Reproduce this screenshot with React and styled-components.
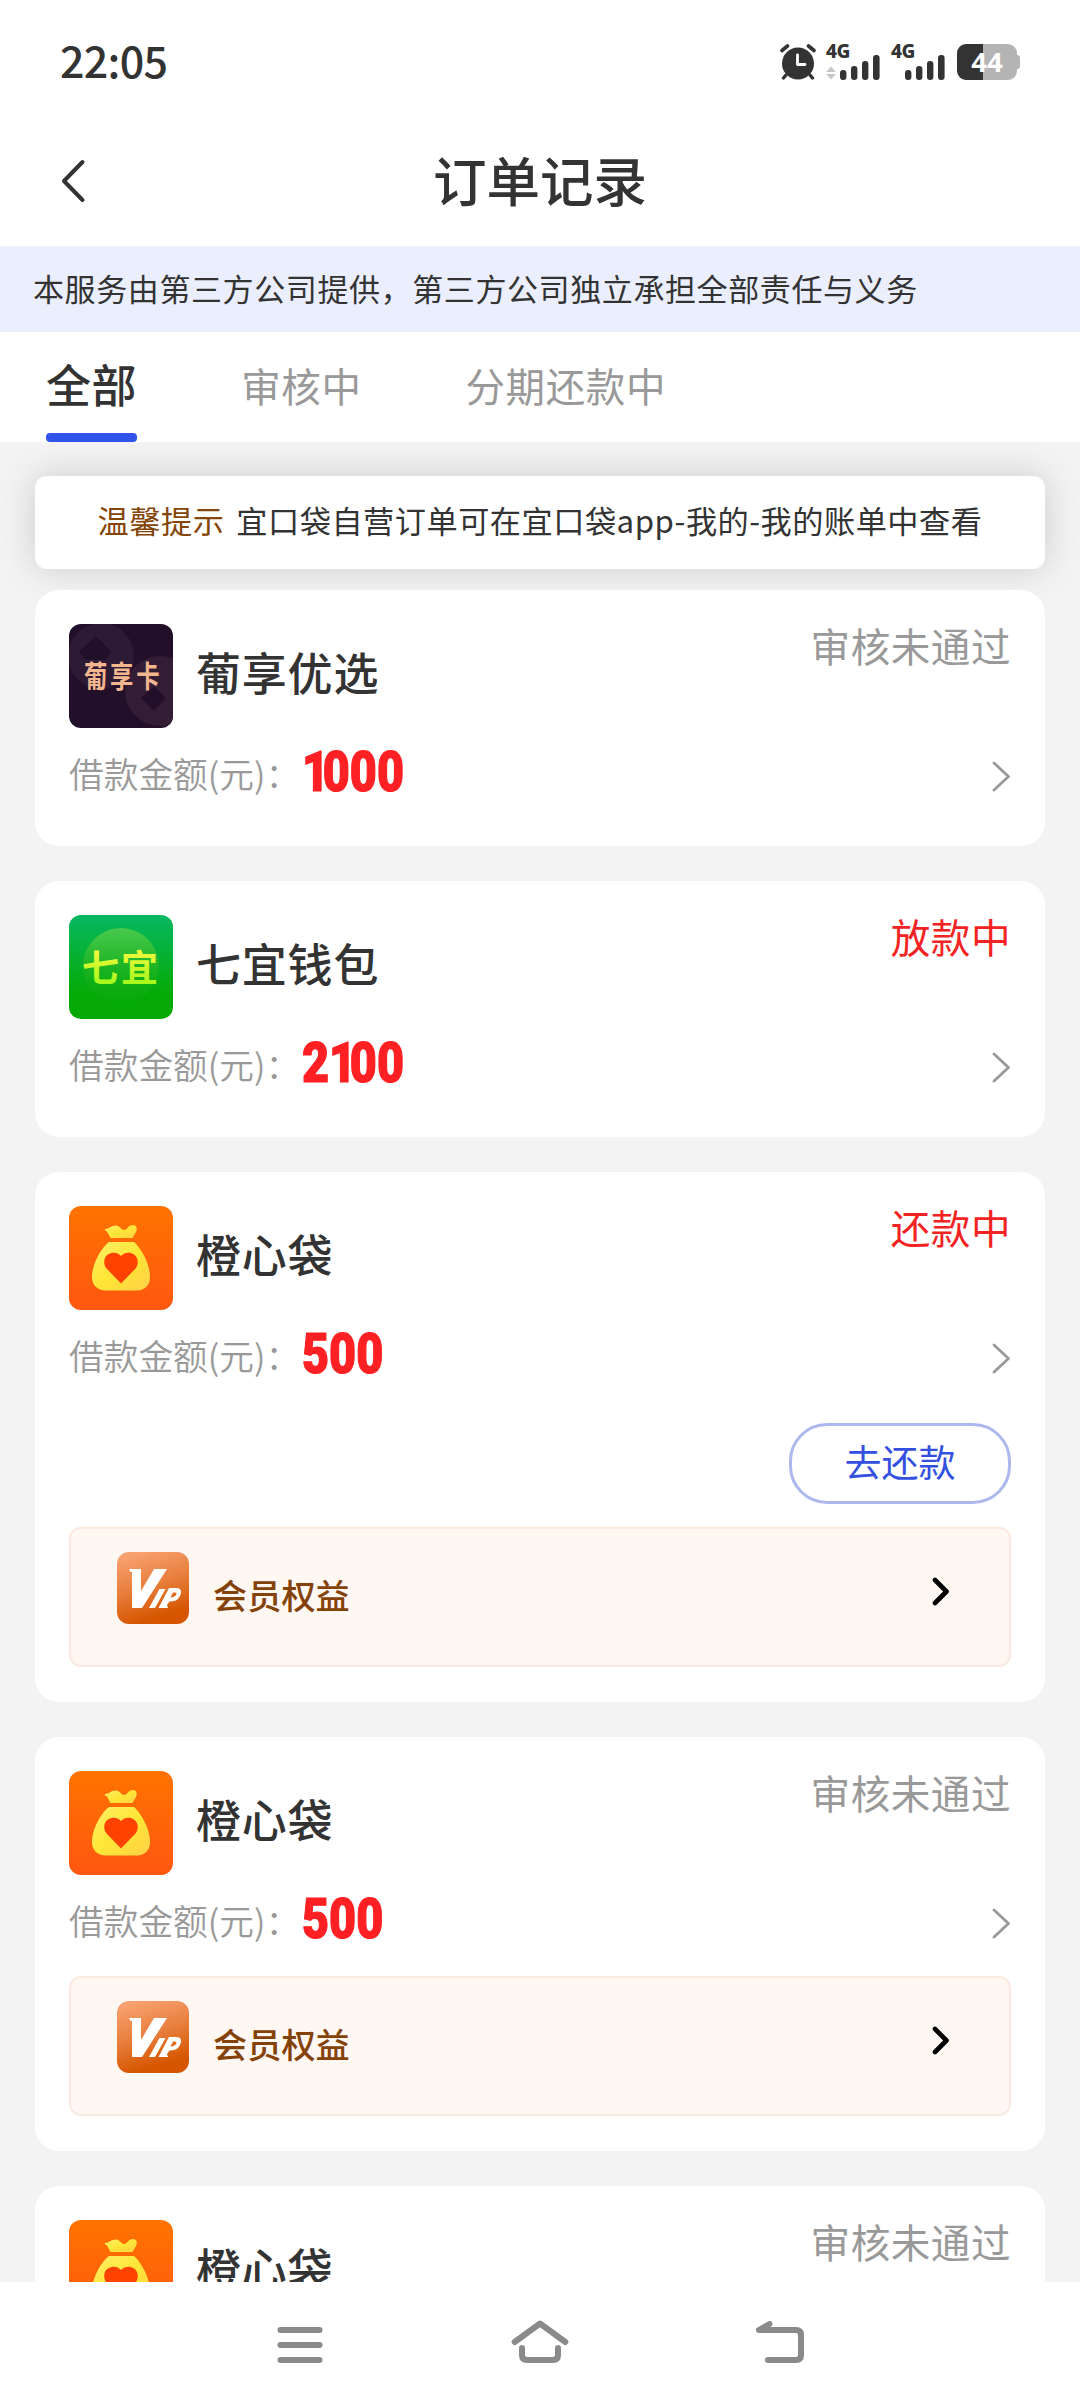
import React from 'react'
import styled, { createGlobalStyle } from 'styled-components'

const orders = [
    { logo: 'grape', name: '葡享优选', amount: '1000', status: '审核未通过' },
    { logo: 'wallet', name: '七宜钱包', amount: '2100', status: '放款中', active: true },
    { logo: 'bag', name: '橙心袋', amount: '500', status: '还款中', active: true, repay: true, vip: true },
    { logo: 'bag', name: '橙心袋', amount: '500', status: '审核未通过', vip: true },
    { logo: 'bag', name: '橙心袋', status: '审核未通过' }
]

const Signal = ({ arrows }) => (
    <SignalBox>
        <SignalLabel>4G</SignalLabel>
        <svg width='55' height='26' viewBox='0 0 55 26'>
            {arrows && <path d='M0 18 L5 12.5 L10 18Z M0 20 H10 L5 25.5Z' fill='#c8c8c8' />}
            <g fill='#333'>
                <rect x='14' y='16' width='6.4' height='10' rx='3' />
                <rect x='25' y='12' width='6.4' height='14' rx='3' />
                <rect x='36' y='7' width='6.4' height='19' rx='3' />
                <rect x='47' y='1' width='6.6' height='25' rx='3' />
            </g>
        </svg>
    </SignalBox>
)

const AlarmIcon = () => (
    <svg width='36' height='36' viewBox='0 0 36 36' fill='none' strokeLinecap='round'>
        <circle cx='18' cy='19.5' r='16' fill='#333' />
        <path d='M2 6.5 L7.5 2 M34 6.5 L28.5 2' stroke='#333' strokeWidth='3.6' />
        <path d='M6 31 L3.5 34 M30 31 L32.5 34' stroke='#333' strokeWidth='3.4' />
        <path d='M17.5 11 V20.5 H25' stroke='#fff' strokeWidth='2.8' strokeLinejoin='round' />
    </svg>
)

const GrapeLogo = () => (
    <Logo viewBox='0 0 104 104'>
        <rect width='104' height='104' fill='#220f29' />
        <circle cx='32' cy='32' r='33' fill='#2d1a34' />
        <circle cx='91' cy='67' r='35' fill='#321d35' />
        <path d='M10 28 L27 12 L43 28 L36 36 H17Z' fill='#220f29' />
        <path d='M72 74 L85 62 L97 74 L85 87Z' fill='#220f29' />
        <LogoText transform='translate(15 63) scale(0.78 1)' fill='#f3b68f' $size='30' $spacing='3.5'>
            葡享卡
        </LogoText>
    </Logo>
)

const WalletLogo = () => (
    <Logo viewBox='0 0 104 104'>
        <defs>
            <linearGradient id='walletBg' x2='0' y2='1'>
                <stop offset='0' stopColor='#07b862' />
                <stop offset='0.75' stopColor='#04aa06' />
                <stop offset='1' stopColor='#06a904' />
            </linearGradient>
            <linearGradient id='walletOrb' x2='0' y2='1'>
                <stop offset='0' stopColor='#49c94e' />
                <stop offset='0.6' stopColor='#16b01c' />
                <stop offset='1' stopColor='#04aa06' />
            </linearGradient>
            <linearGradient id='walletText' x2='0' y2='1'>
                <stop offset='0.2' stopColor='#f6f93c' />
                <stop offset='1' stopColor='#8ef713' />
            </linearGradient>
        </defs>
        <rect width='104' height='104' fill='url(#walletBg)' />
        <circle cx='52' cy='51' r='38' fill='url(#walletOrb)' />
        <LogoText x='13' y='67' fill='url(#walletText)' $size='37' $spacing='2'>七宜</LogoText>
    </Logo>
)

const BagLogo = () => (
    <Logo viewBox='0 0 104 104'>
        <defs>
            <linearGradient id='bagBg' x2='0' y2='1'>
                <stop offset='0' stopColor='#ff7300' />
                <stop offset='1' stopColor='#ff5710' />
            </linearGradient>
            <linearGradient id='bagBody' x2='1' y2='1'>
                <stop offset='0' stopColor='#fff06a' />
                <stop offset='0.5' stopColor='#ffe636' />
                <stop offset='1' stopColor='#ffd147' />
            </linearGradient>
        </defs>
        <rect width='104' height='104' fill='url(#bagBg)' />
        <path
            d='M36 23 C40 23 42 19.500 47 19.500 C51 19.500 52 24 55 24 C58.500 24 59 19 64 19 C68 19 68.500 23 67 26 L63.500 32 H41.500 L38 25.500 C37 24.500 35 25 36 23Z'
            fill='url(#bagBody)'
        />
        <path
            d='M40 36 H65 C72 42 81 58 81 71 C81 79 76 84.500 68 84.500 H37 C28 84.500 23 79 23 71 C23 58 32 42 40 36Z'
            fill='url(#bagBody)'
        />
        <path
            d='M52 77.500 L37.500 62.500 C34 58.500 34.500 51 39 48.500 C43.500 45.500 49 46.500 52 50 C55 46.500 61 45.500 65 48.500 C70 52 69.500 59 66.500 62.500Z'
            fill='#ff4200'
        />
    </Logo>
)

const VipIcon = () => (
    <VipLogo viewBox='0 0 72 72'>
        <defs>
            <linearGradient id='vipBg' x1='0.3' x2='0.6' y2='1'>
                <stop offset='0' stopColor='#f8a170' />
                <stop offset='0.5' stopColor='#e67b38' />
                <stop offset='0.9' stopColor='#d65600' />
            </linearGradient>
        </defs>
        <rect width='72' height='72' fill='url(#vipBg)' />
        <g fill='#fff'>
            <path d='M12 17 H24 V39 L37 17 H50 L25 56 H15 V20 H13.500Z' />
            <path d='M42.500 37 H48.500 L38 56 H32Z' />
            <path
                fillRule='evenodd'
                d='M52 36 H59 C65 36 65.500 41 62 45.500 C60 48.500 57 49.500 52.500 49.500 L50 53 L51 56 H41.500Z M56 40.500 L53.500 45.500 C57 45.500 60 43 59.500 41.500 C59 40.300 58 40.500 56 40.500Z'
            />
        </g>
    </VipLogo>
)

const logos = { grape: GrapeLogo, wallet: WalletLogo, bag: BagLogo }

const OrderCard = ({ order }) => {
    const OrderLogo = logos[order.logo]

    return (
        <Card>
            <CardTop>
                <OrderLogo />
                <Name>{order.name}</Name>
                <Status $active={order.active}>{order.status}</Status>
            </CardTop>
            {order.amount && (
                <AmountRow>
                    <AmountLabel>借款金额(元)：</AmountLabel>
                    <Amount>
                        {order.amount.split('').map((digit, i) => (
                            <Digit key={i} $narrow={digit === '1'}>{digit}</Digit>
                        ))}
                    </Amount>
                    <svg width='20' height='32' viewBox='0 0 20 32' fill='none'>
                        <path d='M3 2 L17.500 15.500 L3 29' stroke='#999' strokeWidth='2.8' strokeLinecap='round' strokeLinejoin='round' />
                    </svg>
                </AmountRow>
            )}
            {order.repay && (
                <Actions>
                    <RepayButton>去还款</RepayButton>
                </Actions>
            )}
            {order.vip && (
                <VipBox $tight={!order.repay}>
                    <VipIcon />
                    <VipLabel>会员权益</VipLabel>
                    <svg width='20' height='30' viewBox='0 0 20 30' fill='none'>
                        <path d='M4 4 L15.500 15.500 L4 27' stroke='#000' strokeWidth='4.600' strokeLinecap='round' strokeLinejoin='round' />
                    </svg>
                </VipBox>
            )}
        </Card>
    )
}

const App = () => (
    <Screen>
        <GlobalStyle />
        <StatusBar>
            <Time>22:05</Time>
            <StatusIcons>
                <AlarmIcon />
                <Signal arrows />
                <Signal />
                <Battery>44</Battery>
            </StatusIcons>
        </StatusBar>
        <Header>
            <svg width='28' height='46' viewBox='0 0 28 46' fill='none'>
                <path d='M23.500 3 L5 22 L23.500 41' stroke='#333' strokeWidth='4' strokeLinecap='round' strokeLinejoin='round' />
            </svg>
            <Title>订单记录</Title>
        </Header>
        <Notice>本服务由第三方公司提供，第三方公司独立承担全部责任与义务</Notice>
        <Tabs>
            <Tab $active>全部</Tab>
            <Tab>审核中</Tab>
            <Tab>分期还款中</Tab>
        </Tabs>
        <List>
            <Tip>
                <TipLabel>温馨提示</TipLabel>
                <span>宜口袋自营订单可在宜口袋app-我的-我的账单中查看</span>
            </Tip>
            {orders.map((order, i) => (
                <OrderCard key={i} order={order} />
            ))}
        </List>
        <NavBar>
            <svg width='60' height='50' viewBox='0 0 60 50'>
                <path d='M10.500 10 H49.500 M10.500 25 H49.500 M10.500 40 H49.500' stroke='#8a8a8a' strokeWidth='6' strokeLinecap='round' />
            </svg>
            <svg width='60' height='50' viewBox='0 0 60 50' fill='none'>
                <path d='M4.700 22 L30 3.500 L55.300 22' stroke='#8a8a8a' strokeWidth='6' strokeLinecap='round' strokeLinejoin='round' />
                <path d='M12 28 V35 Q12 40 17 40 H43 Q48 40 48 35 V28' stroke='#8a8a8a' strokeWidth='6' strokeLinecap='round' />
            </svg>
            <svg width='60' height='50' viewBox='0 0 60 50' fill='none'>
                <path d='M19.500 4 L9 10 H46 Q51 10 51 15 V35 Q51 40 46 40 H18' stroke='#8a8a8a' strokeWidth='6' strokeLinecap='round' strokeLinejoin='round' />
            </svg>
        </NavBar>
    </Screen>
)

const GlobalStyle = createGlobalStyle`
    * {
        box-sizing: border-box;
    }

    body {
        margin: 0;
        color: #333;
        font-family: 'Noto Sans CJK SC', sans-serif;
    }

    svg {
        display: block;
        flex-shrink: 0;
    }
`

const Screen = styled.div`
    width: 1080px;
    height: 2408px;
    display: flex;
    flex-direction: column;
    overflow: hidden;
    background: #fff;
`

const StatusBar = styled.div`
    height: 124px;
    flex-shrink: 0;
    padding: 0 60px 0 60px;
    display: flex;
    justify-content: space-between;
    align-items: center;
`

const Time = styled.div`
    padding-bottom: 6px;
    font-size: 43px;
    font-weight: 500;
    line-height: 50px;
    letter-spacing: -0.7px;
`

const StatusIcons = styled.div`
    height: 36px;
    display: flex;
    align-items: center;
`

const SignalBox = styled.div`
    width: 55px;
    height: 36px;
    margin-left: 10px;
    display: flex;
    flex-direction: column;
    justify-content: space-between;
`

const SignalLabel = styled.div`
    height: 10px;
    font: 800 19px/15px 'Noto Sans', sans-serif;
    letter-spacing: -0.5px;
`

const Battery = styled.div`
    width: 60px;
    height: 36px;
    margin: 0 3px 0 11px;
    position: relative;
    border-radius: 9px;
    background: linear-gradient(to right, #333 26px, #b4b4b4 26px);
    color: #fff;
    font: 700 27.5px/36px 'Noto Sans', sans-serif;
    text-align: center;

    &::after {
        content: '';
        position: absolute;
        right: -3px;
        top: 11px;
        width: 4px;
        height: 14px;
        border-radius: 0 3px 3px 0;
        background: #b4b4b4;
    }
`

const Header = styled.div`
    height: 122px;
    flex-shrink: 0;
    padding: 0 87px 6px 59px;
    display: flex;
    align-items: center;
`

const Title = styled.h1`
    flex: 1;
    margin: 0;
    padding-bottom: 6px;
    font-size: 53.5px;
    font-weight: 500;
    line-height: 60px;
    text-align: center;
`

const Notice = styled.div`
    height: 86px;
    flex-shrink: 0;
    padding-left: 33px;
    background: #ebeefd;
    font-size: 31px;
    line-height: 83px;
    letter-spacing: 0.6px;
    white-space: nowrap;
`

const Tabs = styled.div`
    height: 110px;
    flex-shrink: 0;
    padding-left: 46px;
    display: flex;
    gap: 104px;
`

const Tab = styled.div`
    height: 110px;
    color: ${props => (props.$active ? '#333' : '#999')};
    font-size: ${props => (props.$active ? '45px' : '39.5px')};
    font-weight: ${props => (props.$active ? 500 : 400)};
    line-height: ${props => (props.$active ? '103px' : '105px')};
    letter-spacing: 0.6px;
    white-space: nowrap;

    &::after {
        content: '';
        display: ${props => (props.$active ? 'block' : 'none')};
        height: 9px;
        margin-top: -2px;
        border-radius: 4px;
        background: #3253ea;
    }
`

const List = styled.div`
    flex: 1;
    min-height: 0;
    padding: 34px 35px 0;
    overflow: hidden;
    background: #f3f3f3;
`

const Tip = styled.div`
    height: 93px;
    margin-bottom: 21px;
    padding-bottom: 6px;
    display: flex;
    justify-content: center;
    align-items: center;
    gap: 12px;
    border-radius: 12px;
    background: #fff;
    box-shadow: 0 0 36px rgba(0, 0, 0, 0.16);
    font-size: 31.2px;
    letter-spacing: 0.5px;
    white-space: nowrap;
`

const TipLabel = styled.span`
    color: #854408;
`

const Card = styled.div`
    position: relative;
    margin-bottom: 35px;
    padding: 34px 34px 35px;
    border-radius: 24px;
    background: #fff;
`

const CardTop = styled.div`
    height: 104px;
    display: flex;
    align-items: center;
`

const Logo = styled.svg`
    width: 104px;
    height: 104px;
    border-radius: 12px;
`

const LogoText = styled.text`
    font-size: ${props => props.$size}px;
    font-weight: 700;
    letter-spacing: ${props => props.$spacing}px;
`

const Name = styled.div`
    margin-left: 23px;
    padding-bottom: 8px;
    font-size: 45px;
    font-weight: 500;
    line-height: 60px;
    letter-spacing: 0.8px;
`

const Status = styled.div`
    align-self: flex-start;
    margin: -4px 0 0 auto;
    color: ${props => (props.$active ? '#f42323' : '#999')};
    font-size: 39.6px;
    line-height: 50px;
    letter-spacing: 0.5px;
`

const AmountRow = styled.div`
    height: 83px;
    display: flex;
    align-items: center;

    svg {
        margin-left: auto;
        margin-top: 14px;
    }
`

const AmountLabel = styled.div`
    width: 233px;
    padding-top: 7px;
    color: #999;
    font-size: 34.7px;
    font-weight: 350;
    white-space: nowrap;
`

const Amount = styled.div`
    display: flex;
    padding-top: 4px;
    color: #ff2023;
    font: 900 55px/60px Roboto, sans-serif;
    transform: scaleX(0.85);
    transform-origin: left;
    -webkit-text-stroke: 1.2px #ff2023;
`

const Digit = styled.span`
    letter-spacing: ${props => (props.$narrow ? '-7.5px' : '0')};
`

const Actions = styled.div`
    padding-top: 30px;
    display: flex;
    justify-content: flex-end;
`

const RepayButton = styled.button`
    width: 222px;
    height: 81px;
    padding: 0 0 5px;
    border: 3px solid #acb8ee;
    border-radius: 38px;
    background: #fff;
    color: #3350e0;
    font: inherit;
    font-size: 37px;
    line-height: 68px;
`

const VipBox = styled.div`
    height: 140px;
    margin-top: ${props => (props.$tight ? '18px' : '23px')};
    padding: 23px 58px 0 46px;
    display: flex;
    align-items: flex-start;
    border: 2px solid #f9e9df;
    border-radius: 12px;
    background: #fef7f2;

    > svg:last-child {
        margin: 24px 0 0 auto;
    }
`

const VipLogo = styled.svg`
    width: 72px;
    height: 72px;
    border-radius: 12px;
`

const VipLabel = styled.div`
    margin: 17px 0 0 24px;
    color: #854208;
    font-size: 34.2px;
    font-weight: 500;
    line-height: 50px;
`

const NavBar = styled.div`
    height: 126px;
    flex-shrink: 0;
    display: flex;
    justify-content: center;
    align-items: center;
    gap: 180px;
    background: #fff;
`

export default App
